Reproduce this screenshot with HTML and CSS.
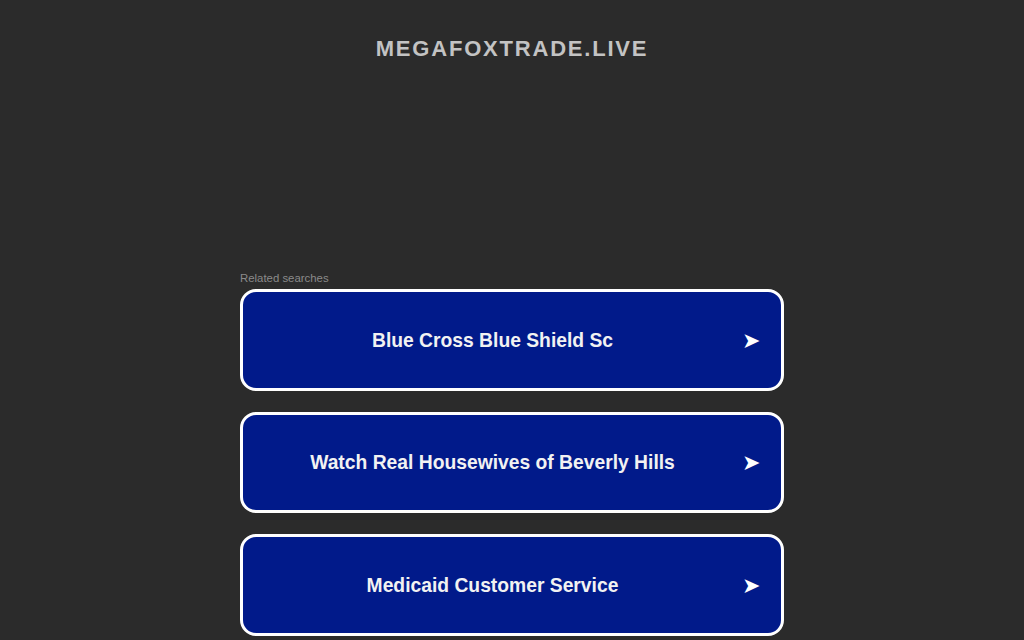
FILE: index.html
```html
<!DOCTYPE html>
<html>
<head>
<meta charset="utf-8">
<link rel="stylesheet" href="styles.css">
</head>
<body>
<header class="header">MEGAFOXTRADE.LIVE</header>
<main class="main">
  <div class="label">Related searches</div>
  <div class="list">
    <a class="card" href="#"><span class="card-text">Blue Cross Blue Shield Sc</span><span class="arrow">➤</span></a>
    <a class="card" href="#"><span class="card-text">Watch Real Housewives of Beverly Hills</span><span class="arrow">➤</span></a>
    <a class="card" href="#"><span class="card-text">Medicaid Customer Service</span><span class="arrow">➤</span></a>
  </div>
</main>
</body>
</html>
```

FILE: styles.css
```css
html, body {
  margin: 0;
  padding: 0;
  background: #2b2b2b;
  font-family: "Liberation Sans", Arial, sans-serif;
  overflow: hidden;
}
.header {
  text-align: center;
  color: #c3c3c3;
  font-weight: bold;
  font-size: 22px;
  letter-spacing: 1.8px;
  line-height: 26px;
  padding-top: 36px;
  height: 236px;
  box-sizing: border-box;
}
.main {
  width: 544px;
  margin: 0 auto;
  padding-top: 35px;
}
.label {
  color: #8a8a8a;
  font-size: 11.4px;
  line-height: 14px;
  margin-bottom: 4px;
}
.list {
  display: flex;
  flex-direction: column;
  gap: 21px;
}
.card {
  display: flex;
  align-items: center;
  height: 101.5px;
  box-sizing: border-box;
  border: 3px solid #ffffff;
  border-radius: 16px;
  background: #011a8a;
  color: #f2f2f2;
  text-decoration: none;
  padding-right: 22px;
  padding-top: 2px;
}
.card-text {
  flex: 1;
  text-align: center;
  font-weight: bold;
  font-size: 19.3px;
}
.arrow {
  width: 17px;
  font-size: 22px;
  color: #ffffff;
}
```
